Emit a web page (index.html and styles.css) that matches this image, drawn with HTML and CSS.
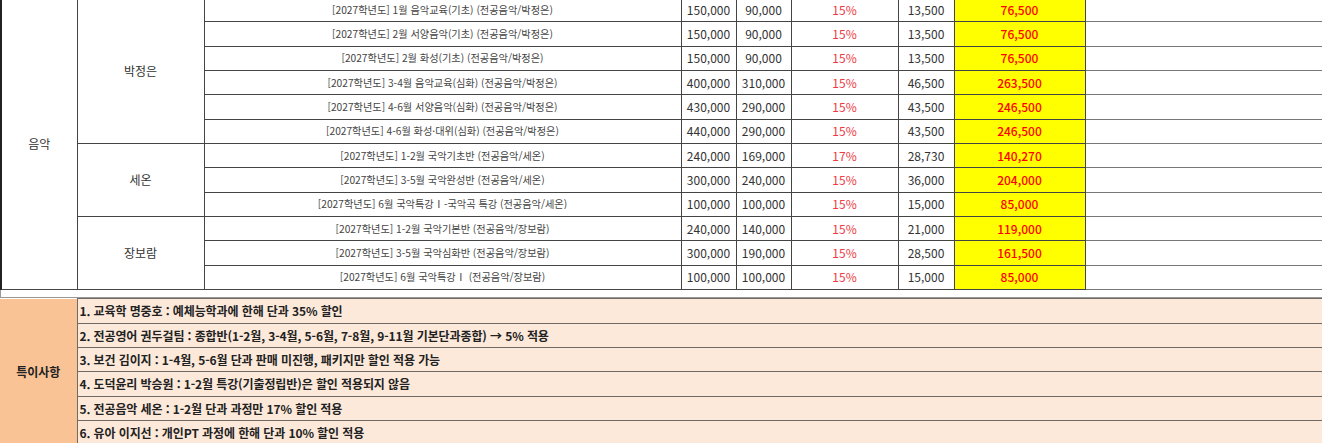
FILE: index.html
```html
<!DOCTYPE html>
<html lang="ko">
<head>
<meta charset="utf-8">
<link rel="stylesheet" href="styles.css">
</head>
<body>
<div class="sheet">
<table class="grid courses">
<colgroup>
<col class="c-cat"><col class="c-name"><col class="c-course"><col class="c-num"><col class="c-num"><col class="c-rate"><col class="c-disc"><col class="c-final"><col class="c-rest">
</colgroup>
<tbody>
<tr>
<td class="cat" rowspan="12">음악</td>
<td class="name" rowspan="6">박정은</td>
<td class="course">[2027학년도] 1월 음악교육(기초) (전공음악/박정은)</td>
<td class="num">150,000</td><td class="num">90,000</td><td class="rate">15%</td><td class="num">13,500</td><td class="final">76,500</td><td class="rest"></td>
</tr>
<tr>
<td class="course">[2027학년도] 2월 서양음악(기초) (전공음악/박정은)</td>
<td class="num">150,000</td><td class="num">90,000</td><td class="rate">15%</td><td class="num">13,500</td><td class="final">76,500</td><td class="rest"></td>
</tr>
<tr>
<td class="course">[2027학년도] 2월 화성(기초) (전공음악/박정은)</td>
<td class="num">150,000</td><td class="num">90,000</td><td class="rate">15%</td><td class="num">13,500</td><td class="final">76,500</td><td class="rest"></td>
</tr>
<tr>
<td class="course">[2027학년도] 3-4월 음악교육(심화) (전공음악/박정은)</td>
<td class="num">400,000</td><td class="num">310,000</td><td class="rate">15%</td><td class="num">46,500</td><td class="final">263,500</td><td class="rest"></td>
</tr>
<tr>
<td class="course">[2027학년도] 4-6월 서양음악(심화) (전공음악/박정은)</td>
<td class="num">430,000</td><td class="num">290,000</td><td class="rate">15%</td><td class="num">43,500</td><td class="final">246,500</td><td class="rest"></td>
</tr>
<tr>
<td class="course">[2027학년도] 4-6월 화성·대위(심화) (전공음악/박정은)</td>
<td class="num">440,000</td><td class="num">290,000</td><td class="rate">15%</td><td class="num">43,500</td><td class="final">246,500</td><td class="rest"></td>
</tr>
<tr>
<td class="name" rowspan="3">세온</td>
<td class="course">[2027학년도] 1-2월 국악기초반 (전공음악/세온)</td>
<td class="num">240,000</td><td class="num">169,000</td><td class="rate">17%</td><td class="num">28,730</td><td class="final">140,270</td><td class="rest"></td>
</tr>
<tr>
<td class="course">[2027학년도] 3-5월 국악완성반 (전공음악/세온)</td>
<td class="num">300,000</td><td class="num">240,000</td><td class="rate">15%</td><td class="num">36,000</td><td class="final">204,000</td><td class="rest"></td>
</tr>
<tr>
<td class="course">[2027학년도] 6월 국악특강Ⅰ-국악곡 특강 (전공음악/세온)</td>
<td class="num">100,000</td><td class="num">100,000</td><td class="rate">15%</td><td class="num">15,000</td><td class="final">85,000</td><td class="rest"></td>
</tr>
<tr>
<td class="name" rowspan="3">장보람</td>
<td class="course">[2027학년도] 1-2월 국악기본반 (전공음악/장보람)</td>
<td class="num">240,000</td><td class="num">140,000</td><td class="rate">15%</td><td class="num">21,000</td><td class="final">119,000</td><td class="rest"></td>
</tr>
<tr>
<td class="course">[2027학년도] 3-5월 국악심화반 (전공음악/장보람)</td>
<td class="num">300,000</td><td class="num">190,000</td><td class="rate">15%</td><td class="num">28,500</td><td class="final">161,500</td><td class="rest"></td>
</tr>
<tr>
<td class="course">[2027학년도] 6월 국악특강Ⅰ (전공음악/장보람)</td>
<td class="num">100,000</td><td class="num">100,000</td><td class="rate">15%</td><td class="num">15,000</td><td class="final">85,000</td><td class="rest"></td>
</tr>
</tbody>
</table>
<div class="spacer"></div>
<table class="grid notes">
<colgroup><col class="c-cat"><col></colgroup>
<tbody>
<tr><td class="notes-head" rowspan="6">특이사항</td><td class="note">1. 교육학 명중호 : 예체능학과에 한해 단과 35% 할인</td></tr>
<tr><td class="note">2. 전공영어 권두걸팀 : 종합반(1-2월, 3-4월, 5-6월, 7-8월, 9-11월 기본단과종합) → 5% 적용</td></tr>
<tr><td class="note">3. 보건 김이지 : 1-4월, 5-6월 단과 판매 미진행, 패키지만 할인 적용 가능</td></tr>
<tr><td class="note">4. 도덕윤리 박승원 : 1-2월 특강(기출정립반)은 할인 적용되지 않음</td></tr>
<tr><td class="note">5. 전공음악 세온 : 1-2월 단과 과정만 17% 할인 적용</td></tr>
<tr><td class="note">6. 유아 이지선 : 개인PT 과정에 한해 단과 10% 할인 적용</td></tr>
</tbody>
</table>
</div>
</body>
</html>
```
FILE: styles.css
```css
html, body {
  margin: 0;
  padding: 0;
  background: #fff;
}
body {
  width: 1322px;
  height: 443px;
  overflow: hidden;
  font-family: "Noto Sans CJK KR", "Noto Sans", sans-serif;
}
.sheet {
  margin-top: -3px;
  width: 1340px;
}
.grid {
  border-collapse: collapse;
  table-layout: fixed;
  width: 1340px;
}
.grid td {
  padding: 0;
  white-space: nowrap;
  overflow: hidden;
}
.c-cat { width: 76px; }
.c-name { width: 127px; }
.c-course { width: 477px; }
.c-num { width: 55px; }
.c-rate { width: 107px; }
.c-disc { width: 56px; }
.c-final { width: 131px; }
.c-rest { width: 257px; }

.notes .c-cat { width: 77px; }

.courses {
  border-left: 2px solid #222;
}
.courses td {
  height: 23.35px;
  border: 1px solid #444;
  text-align: center;
  vertical-align: middle;
  line-height: 14px;
}
.courses .cat,
.courses .name {
  font-size: 12px;
  color: #333;
}
.courses .course {
  font-size: 10.2px;
  color: #444;
}
.courses .num {
  font-size: 12px;
  color: #333;
}
.courses .rate {
  font-size: 12px;
  color: #ef3a45;
}
.courses .final {
  font-size: 12px;
  color: #ff0000;
  background: #ffff00;
  font-weight: 500;
}
.courses .rest {
  border-right: none;
  border-top-color: #777;
  border-bottom-color: #777;
}

.spacer {
  height: 7px;
  border-left: 1px solid #999;
  border-bottom: 1px solid #999;
  box-sizing: content-box;
}

.notes td {
  height: 23.4px;
  border-top: 1px solid #6f6a66;
  border-bottom: 1px solid #6f6a66;
  background: #fce9da;
  vertical-align: middle;
}
.notes .notes-head {
  background: #f9c396;
  border: none;
  border-right: 1px solid #6f6a66;
  text-align: center;
  font-size: 12px;
  font-weight: 700;
  color: #222;
}
.notes .note {
  font-size: 12px;
  font-weight: 700;
  color: #222;
  padding-left: 2px;
  letter-spacing: -0.1px;
}
```
